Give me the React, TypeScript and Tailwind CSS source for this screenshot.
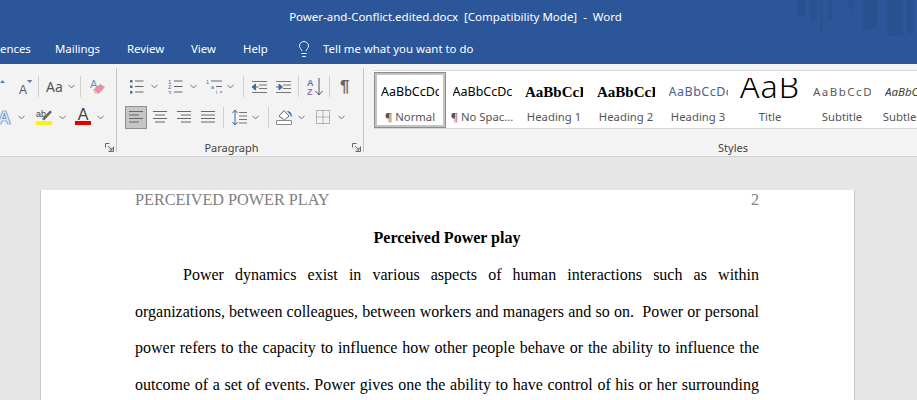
import type { ReactNode } from 'react';
import { ChevronDown, Lightbulb } from 'lucide-react';

const tabs = [
  { label: 'ences', cls: 'w-[55px]' },
  { label: 'Mailings', cls: 'w-[72px]' },
  { label: 'Review', cls: 'w-[64px]' },
  { label: 'View', cls: 'w-[52px]' },
  { label: 'Help', cls: 'w-[54px]' },
];

const styles = [
  { sample: 'AaBbCcDc', name: '¶ Normal', box: 'h-[35px] pb-px', cls: 'w-[58px] text-[12.5px] text-black' },
  { sample: 'AaBbCcDc', name: '¶ No Spac...', box: 'h-[39px] pt-[3px]', cls: 'w-[59px] text-[12.5px] text-black' },
  { sample: 'AaBbCcDc', name: 'Heading 1', box: 'h-[39px] pt-[3px]', cls: "w-[58px] text-[15px] font-bold text-black font-['Liberation_Serif',serif]" },
  { sample: 'AaBbCcDc', name: 'Heading 2', box: 'h-[39px] pt-[3px]', cls: "w-[58px] text-[15px] font-bold text-black font-['Liberation_Serif',serif]" },
  { sample: 'AaBbCcDc', name: 'Heading 3', box: 'h-[39px] pt-[3px]', cls: 'w-[59px] text-[12.5px] tracking-[0.5px] text-[#44618c]' },
  { sample: 'AaB', name: 'Title', box: 'h-[32px] mt-[7px]', cls: 'w-[60px] h-[21px] leading-[16px] text-[32px] font-light tracking-[1px] text-black text-center self-start' },
  { sample: 'AaBbCcDc', name: 'Subtitle', box: 'h-[39px] pt-[3px]', cls: 'w-[58px] text-[11.5px] tracking-[1.5px] text-[#595959]' },
  { sample: 'AaBbCcDc', name: 'Subtle Em...', box: 'h-[39px] pt-[3px]', cls: 'w-[58px] text-[11.5px] italic text-[#404040]' },
];

const bodyLines = [
  { text: 'Power dynamics exist in various aspects of human interactions such as within', indent: true },
  { text: 'organizations, between colleagues, between workers and managers and so on.  Power or personal', indent: false },
  { text: 'power refers to the capacity to influence how other people behave or the ability to influence the', indent: false },
  { text: 'outcome of a set of events. Power gives one the ability to have control of his or her surrounding', indent: false },
];

function Chev() {
  return (
    <div className="w-[9px] flex justify-center">
      <ChevronDown className="w-[11px] h-[11px] shrink-0 text-[#666]" strokeWidth={2} />
    </div>
  );
}

function Divider() {
  return <div className="w-px h-[21px] bg-[#d0d0d0]" />;
}

function Launcher() {
  return (
    <svg width="9" height="9" viewBox="0 0 9 9" fill="none" stroke="#666">
      <path d="M8.5 3.500v5h-5M.5 4.500v-4h4M3 3l4 4M7 4.500V7H4.500" />
    </svg>
  );
}

function Lines({ rows, w = 14, color = '#666' }: { rows: [number, number][]; w?: number; color?: string }) {
  return (
    <svg width={w} height="14" viewBox={`0 0 ${w} 14`} stroke={color} fill="none">
      {rows.map(([x, x2], i) => (
        <path key={i} d={`M${x} ${1.5 + i * 3.5}H${x2}`} />
      ))}
    </svg>
  );
}

function GrowA({ size, caret }: { size: number; caret: string }) {
  return (
    <svg width="14" height="16" viewBox="0 0 14 16" fill="none">
      <text x="0" y="15" fontSize={size} fill="#555" fontFamily="Liberation Sans, sans-serif">A</text>
      <path d={caret} fill="#5b7fa8" />
    </svg>
  );
}

function ListIcon({ numbered }: { numbered?: boolean }) {
  return (
    <svg width="15" height="15" viewBox="0 0 15 15" fill="none">
      {[2, 7.5, 13].map((y, i) => (
        <g key={y}>
          {numbered ? (
            <text x="0" y={y + 2.5} fontSize="6" fill="#3f6a9e" fontFamily="Liberation Sans, sans-serif">{i + 1}</text>
          ) : (
            <rect x="1" y={y - 1} width="2.5" height="2.5" fill="#4a6f9c" />
          )}
          <path d={`M6 ${y}h8.500`} stroke="#666" />
        </g>
      ))}
    </svg>
  );
}

function MultiIcon() {
  return (
    <svg width="17" height="15" viewBox="0 0 17 15" fill="none">
      <text x="0" y="5" fontSize="5.500" fill="#3f6a9e" fontFamily="Liberation Sans, sans-serif">1</text>
      <path d="M5 2h11" stroke="#666" />
      <text x="5" y="10" fontSize="5.500" fill="#3f6a9e" fontFamily="Liberation Sans, sans-serif">a</text>
      <path d="M10 7.500h6" stroke="#666" />
      <text x="10" y="15" fontSize="5.500" fill="#3f6a9e" fontFamily="Liberation Sans, sans-serif">i</text>
      <path d="M14 13h2" stroke="#666" />
    </svg>
  );
}

function IndentIcon({ flip }: { flip?: boolean }) {
  return (
    <svg width="17" height="14" viewBox="0 0 17 14" fill="none">
      <path d="M1 1.500h15M8 5h8M8 8.500h8M1 12.500h15" stroke="#777" />
      <path d={flip ? 'M1 7h3M4 4v6L7.500 7z' : 'M7.500 7h-3M4.500 4v6L1 7z'} stroke="#3e6ea6" fill="#3e6ea6" />
    </svg>
  );
}

function SortIcon() {
  return (
    <svg width="16" height="20" viewBox="0 0 16 20" fill="none">
      <text x="0" y="8.500" fontSize="9" fontWeight="700" fill="#4f7cae" fontFamily="Liberation Sans, sans-serif">A</text>
      <text x="0" y="18" fontSize="9" fontWeight="700" fill="#a26cc0" fontFamily="Liberation Sans, sans-serif">Z</text>
      <path d="M12 1v17M8.500 14l3.500 4 3.500-4" stroke="#555" />
    </svg>
  );
}

function LineSpacing() {
  return (
    <svg width="15" height="17" viewBox="0 0 15 17" fill="none">
      <path d="M3 1v15M.5 4 3 1l2.500 3M.5 13 3 16l2.500-3" stroke="#3e6ea6" />
      <path d="M7 3.500h8M7 7h8M7 10.500h8M7 14h8" stroke="#777" />
    </svg>
  );
}

function Shading() {
  return (
    <svg width="17" height="16" viewBox="0 0 17 16" fill="none">
      <path d="M3 7 8 1.500 13 7l-4.500 4z" stroke="#666" fill="#fff" />
      <path d="M11 2c2.500 0 5 2 5 5.500-1 0-1.500-.5-1.500-1.500z" fill="#2f6aa8" />
      <path d="M.5 11.500h15v4H.5z" stroke="#888" fill="#fff" />
    </svg>
  );
}

function Borders() {
  return (
    <svg width="14" height="14" viewBox="0 0 14 14" fill="none" stroke="#777" strokeDasharray="1 1">
      <path d="M.5.500h13v13H.5zM7 .500v13M.5 7h13" />
    </svg>
  );
}

function Eraser() {
  return (
    <svg width="16" height="17" viewBox="0 0 16 17" fill="none">
      <text x="0" y="10" fontSize="11" fill="#6f8db0" fontFamily="Liberation Sans, sans-serif">A</text>
      <path d="M3 12 10 6l5 3-6 6.500H5.500z" fill="#ea8f9b" />
      <path d="M3.500 11.500 7 15" stroke="#f7d5da" />
    </svg>
  );
}

function Highlighter() {
  return (
    <svg width="17" height="16" viewBox="0 0 17 16" fill="none">
      <text x="0" y="7.500" fontSize="9" fill="#444" fontFamily="Liberation Sans, sans-serif">ab</text>
      <path d="M6 10 14 1.500l2 1.500-8 8.500z" fill="#666" />
      <rect x="0" y="12" width="16" height="4" fill="#f7f219" />
    </svg>
  );
}

function FontColor() {
  return (
    <div className="w-4 h-[16px] flex flex-col items-center">
      <span className="text-[16px] leading-[12px] text-[#444] font-['Liberation_Sans',sans-serif]">A</span>
      <span className="w-4 h-1 bg-[#e00000]" />
    </div>
  );
}

function Group({ cls, label, children }: { cls: string; label?: string; children: ReactNode }) {
  return (
    <div className={`relative shrink-0 h-full flex flex-col ${cls}`}>
      {children}
      {label && <div className="mt-auto mb-px pr-[18px] text-center text-[11px] leading-[14px] text-[#444]">{label}</div>}
      <div className="absolute right-0 -top-[2px] bottom-[4px] w-px bg-[#c6c6c6]" />
      <div className="absolute right-[3px] bottom-[4px]"><Launcher /></div>
    </div>
  );
}

export default function App() {
  return (
    <div className="w-[917px] h-[400px] overflow-hidden flex flex-col bg-[#e6e6e6] font-['Noto_Sans','Open_Sans',sans-serif]">
      <div className="relative shrink-0 h-[64px] bg-[#2b579a] text-white">
        <svg className="absolute left-[797px] top-0" width="120" height="36" viewBox="0 0 120 36" fill="#28518f">
          <path d="M0 0h8v17H0zM13 0h7v20h-7zM23 0h3v32h-3zM31 0h4v20h-4zM51 0h6l-3 15zM66 0h14v28l-14 4zM90 0h16v36H90zM110 0h6v34h-6z" />
        </svg>
        <div className="relative h-[33px] flex items-center justify-center text-[11.5px] leading-4">
          <span className="whitespace-pre mr-[6px]">Power-and-Conflict.edited.docx  [Compatibility Mode]  -  Word</span>
        </div>
        <div className="relative h-[31px] flex items-center text-[11.4px] leading-4">
          {tabs.map((t) => (
            <span key={t.label} className={`whitespace-nowrap shrink-0 ${t.cls}`}>{t.label}</span>
          ))}
          <div className="w-[26px] shrink-0"><Lightbulb className="w-[18px] h-[20px] -ml-[2px] text-white" strokeWidth={1.2} /></div>
          <span className="whitespace-nowrap">Tell me what you want to do</span>
        </div>
      </div>

      <div className="shrink-0 h-[93px] bg-[#f3f3f3] border-b border-[#d2d2d2] flex pt-[6px]">
        <Group cls="w-[117px]">
          <div className="h-[33px] flex items-center -ml-[9px]">
            <GrowA size={13} caret="M9 4l2.500-3L14 4z" />
            <div className="ml-[14px]"><GrowA size={12} caret="M8 1h5.500l-2.750 3z" /></div>
            <div className="ml-[5px]"><Divider /></div>
            <span className="ml-[7px] text-[14px] leading-5 text-[#555]">Aa</span>
            <div className="ml-[4px]"><Chev /></div>
            <div className="ml-[4px]"><Divider /></div>
            <div className="ml-[9px]"><Eraser /></div>
          </div>
          <div className="h-[28px] flex items-center -ml-[2px]">
            <span className="w-[14px] text-[18px] leading-5 text-[#dbe9f6] font-bold [-webkit-text-stroke:0.7px_#4f86c0]">A</span>
            <div className="ml-[5px]"><Chev /></div>
            <div className="ml-[10px]"><Highlighter /></div>
            <div className="ml-[5px]"><Chev /></div>
            <div className="ml-[8px]"><FontColor /></div>
            <div className="ml-[5px]"><Chev /></div>
          </div>
        </Group>

        <Group cls="w-[247px]" label="Paragraph">
          <div className="h-[33px] flex items-center pl-[12px]">
            <ListIcon />
            <div className="ml-[6px]"><Chev /></div>
            <div className="ml-[9px]"><ListIcon numbered /></div>
            <div className="ml-[6px]"><Chev /></div>
            <div className="ml-[8px]"><MultiIcon /></div>
            <div className="ml-[3px]"><Chev /></div>
            <div className="ml-[8px]"><Divider /></div>
            <div className="ml-[7px]"><IndentIcon /></div>
            <div className="ml-[7px]"><IndentIcon flip /></div>
            <div className="ml-[6px]"><Divider /></div>
            <div className="ml-[8px]"><SortIcon /></div>
            <div className="ml-[6px]"><Divider /></div>
            <span className="ml-[10px] text-[17px] font-bold leading-5 text-[#666] font-['Liberation_Sans',sans-serif]">¶</span>
          </div>
          <div className="h-[28px] flex items-center pl-[8px]">
            <div className="w-[22px] h-[23px] bg-[#c6c6c6] border border-[#8f8f8f] flex items-center justify-center">
              <Lines rows={[[0, 14], [0, 10], [0, 14], [0, 10]]} />
            </div>
            <div className="ml-[6px]"><Lines rows={[[0, 14], [2, 12], [0, 14], [2, 12]]} /></div>
            <div className="ml-[10px]"><Lines rows={[[0, 14], [4, 14], [0, 14], [4, 14]]} /></div>
            <div className="ml-[10px]"><Lines rows={[[0, 14], [0, 14], [0, 14], [0, 14]]} /></div>
            <div className="ml-[8px]"><Divider /></div>
            <div className="ml-[8px]"><LineSpacing /></div>
            <div className="ml-[4px]"><Chev /></div>
            <div className="ml-[8px]"><Divider /></div>
            <div className="ml-[7px]"><Shading /></div>
            <div className="ml-[4px]"><Chev /></div>
            <div className="ml-[10px]"><Borders /></div>
            <div className="ml-[7px]"><Chev /></div>
          </div>
        </Group>

        <div className="flex-1 min-w-0 flex flex-col">
          <div className="ml-[10px] h-[59px] bg-white border-y border-[#d6d6d6] flex overflow-hidden">
            {styles.map((s, i) => (
              <div
                key={s.name}
                className={`shrink-0 w-[72px] flex flex-col items-center overflow-hidden ${i === 0 ? 'h-[56px] mt-px border-[3px] border-[#c4c4c4] outline outline-[#8c8c8c] -outline-offset-1' : 'h-[57px]'}`}
              >
                <div className={`w-full flex items-center justify-center shrink-0 ${s.box}`}>
                  <div className={`overflow-hidden whitespace-nowrap ${s.cls}`}>{s.sample}</div>
                </div>
                <div className="text-[11.3px] leading-[14px] text-[#555] whitespace-nowrap">{s.name}</div>
              </div>
            ))}
          </div>
          <div className="mt-auto mb-px pl-[345px] w-[393px] text-center text-[11px] leading-[14px] text-[#444]">Styles</div>
        </div>
      </div>

      <div className="flex-1 min-h-0 pt-[33px] pl-[40px]">
        <div className="w-[815px] h-[300px] pt-px bg-white border-x border-[#c8c8c8] pl-[94px] pr-[95px] font-['Liberation_Serif',serif] text-black">
          <div className="flex justify-between text-[16.2px] leading-[18px] text-[#808080]">
            <span>PERCEIVED POWER PLAY</span>
            <span>2</span>
          </div>
          <div className="mt-[19px] text-center font-bold text-[16px] leading-[20px]">Perceived Power play</div>
          <div className="mt-[9px] text-[16px] leading-[36.500px]">
            {bodyLines.map((l) => (
              <div key={l.text} className={`whitespace-pre-wrap [text-align:justify] [text-align-last:justify] ${l.indent ? 'pl-[48px]' : ''}`}>
                {l.text}
              </div>
            ))}
          </div>
        </div>
      </div>
    </div>
  );
}
